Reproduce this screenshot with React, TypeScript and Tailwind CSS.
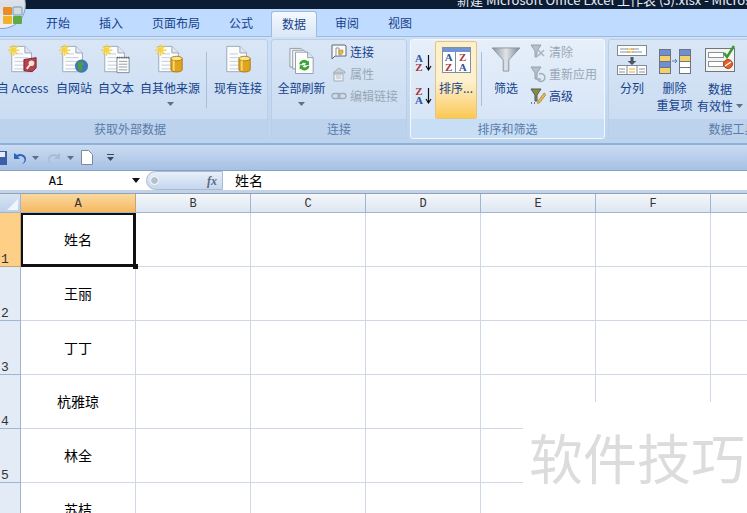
import React from "react";

const font = { fontFamily: '"Noto Sans CJK SC", "Liberation Sans", sans-serif' };

const columns = ["A", "B", "C", "D", "E", "F", "G"];
const rows = [
  { n: 1, name: "姓名" },
  { n: 2, name: "王丽" },
  { n: 3, name: "丁丁" },
  { n: 4, name: "杭雅琼" },
  { n: 5, name: "林全" },
  { n: 6, name: "苏桔" },
];

const DocIcon = ({ badge, star = true }: { badge: string; star?: boolean }) => (
  <svg width="30" height="31" viewBox="0 0 32 32">
    <path d="M4 2h14l7 7v20H4z" fill="#fbfcfe" stroke="#9aa6b4" />
    <path d="M18 2v7h7" fill="#dfe6ee" stroke="#9aa6b4" />
    <path d="M7 10h9M7 14h14M7 18h14M7 22h14M7 26h14" stroke="#c3ccd6" />
    {star && (
      <path
        d="M6 0v12M0 6h12M2 2l8 8M10 2l-8 8"
        stroke="#f6d43f"
        strokeWidth="1.6"
      />
    )}
    {badge === "access" && (
      <g>
        <path d="M17 16l13-2v11l-4 4-9-1z" fill="#b5434f" stroke="#7d2530" />
        <circle cx="25" cy="20" r="3" fill="#f6e2d8" />
        <path d="M24 21l-4 5" stroke="#f6e2d8" strokeWidth="2" />
      </g>
    )}
    {badge === "web" && (
      <g>
        <circle cx="24" cy="23" r="7" fill="#3f79b5" />
        <path d="M20 19l5-1 2 3-3 2 1 4-3 2-2-5z" fill="#4f9a45" />
      </g>
    )}
    {badge === "text" && (
      <g>
        <path d="M17 14h13v16H17z" fill="#fff" stroke="#7f8790" />
        <path d="M17 14h13" stroke="#555" strokeDasharray="1 1" strokeWidth="2" />
        <path d="M19 18h9M19 21h9M19 24h9M19 27h9" stroke="#8d96a1" />
      </g>
    )}
    {badge === "db" && (
      <g>
        <path d="M17 15v12c0 3 12 3 12 0V15z" fill="#e0a51f" stroke="#a87a12" />
        <ellipse cx="23" cy="15" rx="6" ry="2.4" fill="#fbe48c" stroke="#a87a12" />
        <path d="M20 17v11" stroke="#f7d76a" strokeWidth="2" />
      </g>
    )}
  </svg>
);

const RefreshIcon = () => (
  <svg width="26" height="29" viewBox="0 0 28 30">
    <path d="M1 2h12l5 5v15H1z" fill="#f2f4f7" stroke="#8f9aa6" />
    <path d="M4 4h12l5 5v15H4z" fill="#f6f8fa" stroke="#8f9aa6" />
    <path d="M7 6h13l6 6v17H7z" fill="#fff" stroke="#8f9aa6" />
    <path d="M20 6v6h6" fill="#dfe6ee" stroke="#8f9aa6" />
    <path d="M11 19a5.5 5.5 0 0 1 9.5-3l1-1v5h-5l1.800-1.800a3 3 0 0 0-4.800 1z" fill="#3aa535" />
    <path d="M22 21a5.500 5.500 0 0 1-9.500 3l-1 1v-5h5l-1.800 1.800a3 3 0 0 0 4.800-1z" fill="#3aa535" />
  </svg>
);

const ConnIcon = () => (
  <svg width="16" height="16" viewBox="0 0 16 16">
    <path d="M1 1h13l1 1v10H4l-3 3z" fill="#f7f8fa" stroke="#5e6875" />
    <path d="M5 4h3v8H5z" fill="#fff" stroke="#8a94a0" />
    <path d="M8 6h4v3l-2 2-2-1z" fill="#e8b93a" stroke="#a77f1b" strokeWidth="0.5" />
  </svg>
);

const PropsIcon = () => (
  <svg width="16" height="16" viewBox="0 0 16 16">
    <path d="M2 7l6-5 6 4v1H2z" fill="#c8ced6" stroke="#a5adb8" />
    <path d="M3 8h9v7H3z" fill="#eef1f4" stroke="#a5adb8" />
    <path d="M5 10h5M5 12h5" stroke="#b7bec8" />
  </svg>
);

const LinkIcon = () => (
  <svg width="16" height="16" viewBox="0 0 16 16">
    <rect x="1" y="5.500" width="8" height="5" rx="2.500" fill="none" stroke="#a2aab5" strokeWidth="1.300" />
    <rect x="7" y="5.500" width="8" height="5" rx="2.500" fill="none" stroke="#a2aab5" strokeWidth="1.300" />
  </svg>
);

const SortSmall = ({ top, bottom }: { top: string; bottom: string }) => (
  <div className="flex items-center h-[18px] w-[17px] gap-[1px]">
    <div className="flex flex-col items-center w-[9px] text-[11px] leading-[9px] font-bold" style={{ fontFamily: '"Liberation Serif", serif' }}>
      <span className={top === "A" ? "text-[#2f5597]" : "text-[#a03a3a]"}>{top}</span>
      <span className={bottom === "A" ? "text-[#2f5597]" : "text-[#a03a3a]"}>{bottom}</span>
    </div>
    <svg width="7" height="16" viewBox="0 0 7 16">
      <path d="M3.500 0v14M1 11l2.500 4L6 11" fill="none" stroke="#111" strokeWidth="1.200" />
    </svg>
  </div>
);

const SortBig = () => (
  <div className="w-[29px] h-[26px] border border-[#7f8ea3] bg-white flex flex-col">
    <div className="h-[4px] bg-[#6f95d6]" />
    <div
      className="flex-1 grid grid-cols-2 text-[11px] leading-[10px] font-bold text-center"
      style={{ fontFamily: '"Liberation Serif", serif' }}
    >
      <div className="border-r border-[#7f8ea3] text-[#2f5597]">A<br /><span className="text-[#a03a3a]">Z</span></div>
      <div className="text-[#a03a3a]">Z<br /><span className="text-[#2f5597]">A</span></div>
    </div>
  </div>
);

const Funnel = () => (
  <svg width="30" height="25" viewBox="0 0 32 27" className="mb-[3px]">
    <defs>
      <linearGradient id="fn" x1="0" x2="1">
        <stop offset="0" stopColor="#8a949e" />
        <stop offset="0.5" stopColor="#dfe4e8" />
        <stop offset="1" stopColor="#7d8790" />
      </linearGradient>
    </defs>
    <path d="M1 1h30L19 14v12h-6V14z" fill="url(#fn)" stroke="#8a949e" />
  </svg>
);

const SmallFunnel = ({ mode }: { mode: string }) => (
  <svg width="16" height="18" viewBox="0 0 16 18">
    <path
      d="M1 2h10L7 8v6H5V8z"
      fill={mode === "adv" ? "#8b8f3c" : "#b7c0ca"}
      stroke={mode === "adv" ? "#555" : "#98a2ae"}
    />
    {mode === "clear" && <path d="M8 7l6 6M14 7l-6 6" stroke="#aab3bd" strokeWidth="1.500" />}
    {mode === "reapply" && <path d="M9 9a4 4 0 1 1 0 7l-2-2h4" fill="none" stroke="#9fb0ba" strokeWidth="1.500" />}
    {mode === "adv" && (
      <g>
        <path d="M8 14l6-8 2 1.500-6 8-2.500 1z" fill="#eab84a" stroke="#7a5b16" strokeWidth="0.500" />
        <path d="M1 16h1M4 16h1" stroke="#111" />
      </g>
    )}
  </svg>
);

const TextToColumns = () => (
  <svg width="30" height="30" viewBox="0 0 30 30">
    <rect x="0.500" y="0.500" width="29" height="10" fill="#fff" stroke="#7f8a97" />
    <path d="M3 4h8M14 4h8M3 7h10M15 7h10" stroke="#8793a0" />
    <path d="M10 4h7M10 7h7" stroke="#eba92d" />
    <path d="M13.500 12h3v4h3l-4.500 4-4.500-4h3z" fill="#4c5560" />
    <rect x="0.500" y="20.500" width="29" height="9" fill="#fff" stroke="#7f8a97" />
    <path d="M10 20v10M20 20v10" stroke="#7f8a97" />
    <path d="M2 24h6M2 27h6M22 24h6M22 27h6" stroke="#8793a0" />
    <path d="M12 24h6M12 27h6" stroke="#eba92d" />
  </svg>
);

const Dedup = () => (
  <svg width="32" height="26" viewBox="0 0 32 26">
    {[0, 1, 2, 3].map((i) => (
      <rect key={i} x="0.500" y={0.5 + i * 6} width="11" height="6" fill={i % 2 ? "#f4cf6a" : "#6f8fd0"} stroke="#6a7584" />
    ))}
    <path d="M13 12h5M16 10l2 2-2 2" fill="none" stroke="#5b7fb0" />
    {[0, 1, 2, 3].map((i) => (
      <rect key={i} x="20.500" y={0.5 + i * 6} width="11" height="6" fill={i === 0 ? "#6f8fd0" : i === 1 ? "#f4cf6a" : "#fff"} stroke="#6a7584" />
    ))}
  </svg>
);

const Validation = () => (
  <svg width="31" height="28" viewBox="0 0 31 28" className="mb-[2px]">
    <rect x="0.500" y="3.500" width="29" height="23" fill="#f4f5f2" stroke="#6e7680" />
    <rect x="3.500" y="7.500" width="15" height="5" fill="#fff" stroke="#8a929c" />
    <rect x="3.500" y="16.500" width="15" height="5" fill="#fff" stroke="#8a929c" />
    <path d="M19 8l3 4 7-11" fill="none" stroke="#3b9a2f" strokeWidth="2.500" />
    <circle cx="23" cy="19" r="4.500" fill="#e2612a" stroke="#b03f15" />
    <path d="M20 21l6-4" stroke="#fff" strokeWidth="1.300" />
  </svg>
);

const Arrow = () => (
  <svg width="7" height="4" viewBox="0 0 7 4">
    <path d="M0 0h7L3.500 4z" fill="#5f6f85" />
  </svg>
);

const BigButton = ({
  width,
  icon,
  label,
  arrow,
}: {
  width: string;
  icon: React.ReactNode;
  label: string;
  arrow?: boolean;
}) => (
  <div className={`${width} shrink-0 flex flex-col items-center pt-[4px]`}>
    <div className="h-[31px] flex items-end justify-center">{icon}</div>
    <div className="mt-[4px] text-xs leading-[18px] whitespace-nowrap text-[#15428b]">{label}</div>
    {arrow && (
      <div className="mt-[5px]">
        <Arrow />
      </div>
    )}
  </div>
);

const SmallRow = ({
  icon,
  label,
  disabled,
}: {
  icon: React.ReactNode;
  label: string;
  disabled?: boolean;
}) => (
  <div className="h-[22px] flex items-center gap-[3px]">
    <div className="w-[16px] flex justify-center">{icon}</div>
    <span className={`text-xs whitespace-nowrap ${disabled ? "text-[#9aa7b6]" : "text-[#15428b]"}`}>{label}</span>
  </div>
);

const Group = ({
  width,
  label,
  active,
  children,
}: {
  width: string;
  label: string;
  active?: boolean;
  children: React.ReactNode;
}) => (
  <div
    className={`${width} shrink-0 h-[100px] flex flex-col rounded-[3px] border overflow-hidden ${
      active
        ? "border-[#f4f8fd] bg-gradient-to-b from-[#e6effa] to-[#d3e3f6]"
        : "border-[#b9cfe9] bg-gradient-to-b from-[#d9e6f6] to-[#c7daf1]"
    }`}
  >
    <div className="h-[80px] flex">{children}</div>
    <div
      className={`h-[19px] text-xs leading-[19px] text-center text-[#5a7ba8] ${
        active ? "bg-[#c8def5]" : "bg-[#bdd3ed]"
      }`}
    >
      {label}
    </div>
  </div>
);

export default function App() {
  return (
    <div className="relative w-[747px] h-[513px] overflow-hidden bg-white" style={font}>
      {/* title bar */}
      <div className="h-[9px] bg-[#0c1c33] overflow-hidden relative">
        <div className="absolute left-[457px] top-[-9px] text-[13px] leading-[17px] whitespace-nowrap text-[#e8edf3]">
          新建 Microsoft Office Excel 工作表 (3).xlsx - Microsoft Excel
        </div>
      </div>

      {/* tabs */}
      <div className="h-[28px] bg-[#bfdbff] flex items-end pl-[35px] text-xs text-[#15428b] border-b border-[#9ebbdf]">
        {["开始", "插入", "页面布局", "公式", "数据", "审阅", "视图"].map((t) => (
          <div
            key={t}
            className={`mr-[7px] leading-[24px] ${
              t === "数据"
                ? "h-[26px] px-[10px] bg-gradient-to-b from-[#f5f9fe] to-[#d9e7f7] border border-b-0 border-[#9ebbdf] rounded-t-[3px] -mb-[1px]"
                : "h-[25px] px-[11px]"
            }`}
          >
            {t}
          </div>
        ))}
      </div>

      {/* ribbon */}
      <div className="h-[108px] pt-[2px] bg-gradient-to-b from-[#cfe0f5] to-[#bcd3ee] border-b-2 border-[#8fb0d8]">
        <div className="flex gap-[3px] -ml-[8px]">
          <Group width="w-[276px]" label="获取外部数据">
            <BigButton width="w-[59px]" icon={<DocIcon badge="access" />} label="自 Access" />
            <BigButton width="w-[44px]" icon={<DocIcon badge="web" />} label="自网站" />
            <BigButton width="w-[40px]" icon={<DocIcon badge="text" />} label="自文本" />
            <BigButton width="w-[68px]" icon={<DocIcon badge="db" />} label="自其他来源" arrow />
            <div className="w-px h-[56px] mt-[12px] ml-[2px] mr-[4px] bg-[#a9bfd9]" />
            <BigButton width="w-[54px]" icon={<DocIcon badge="db" star={false} />} label="现有连接" />
          </Group>
          <Group width="w-[136px]" label="连接">
            <BigButton width="w-[59px]" icon={<RefreshIcon />} label="全部刷新" arrow />
            <div className="pt-[1px]">
              <SmallRow icon={<ConnIcon />} label="连接" />
              <SmallRow icon={<PropsIcon />} label="属性" disabled />
              <SmallRow icon={<LinkIcon />} label="编辑链接" disabled />
            </div>
          </Group>
          <Group width="w-[195px]" label="排序和筛选" active>
            <div className="w-[24px] shrink-0 flex flex-col items-center gap-[15px] pt-[14px]">
              <SortSmall top="A" bottom="Z" />
              <SortSmall top="Z" bottom="A" />
            </div>
            <div className="w-[42px] h-[78px] shrink-0 mt-px flex flex-col items-center pt-[5px] border border-[#e0c48a] rounded-[2px] bg-gradient-to-b from-[#fdf0c6] via-[#fdf1d0] to-[#fbc94f]">
              <SortBig />
              <div className="mt-[6px] text-xs leading-[18px] text-[#15428b]">排序...</div>
            </div>
            <div className="w-px h-[54px] mt-[12px] ml-[4px] bg-[#a9bfd9]" />
            <BigButton width="w-[48px]" icon={<Funnel />} label="筛选" />
            <div className="pt-[1px]">
              <SmallRow icon={<SmallFunnel mode="clear" />} label="清除" disabled />
              <SmallRow icon={<SmallFunnel mode="reapply" />} label="重新应用" disabled />
              <SmallRow icon={<SmallFunnel mode="adv" />} label="高级" />
            </div>
          </Group>
          <Group width="w-[249px]" label="数据工具">
            <BigButton width="w-[46px]" icon={<TextToColumns />} label="分列" />
            <div className="w-[39px] shrink-0 flex flex-col items-center pt-[4px]">
              <div className="h-[31px] flex items-end"><Dedup /></div>
              <div className="mt-[4px] text-xs leading-[18px] text-[#15428b] whitespace-nowrap">删除</div>
              <div className="text-xs leading-[16px] text-[#15428b] whitespace-nowrap">重复项</div>
            </div>
            <div className="w-[48px] shrink-0 flex flex-col items-center pt-[4px] ml-[2px]">
              <div className="h-[31px] flex items-end"><Validation /></div>
              <div className="mt-[5px] text-xs leading-[18px] text-[#15428b] whitespace-nowrap">数据</div>
              <div className="text-xs leading-[16px] text-[#15428b] whitespace-nowrap flex items-center gap-[3px]">
                有效性 <Arrow />
              </div>
            </div>
          </Group>
        </div>
      </div>

      {/* quick access toolbar */}
      <div className="h-[26px] bg-gradient-to-b from-[#cbdcf2] to-[#a6c0e4] border-b border-[#8aa3c4] flex items-center gap-[5px] -ml-[2px]">
        <svg width="9" height="14" viewBox="0 0 9 14">
          <path d="M0 0h9v14H0z" fill="#3b5fa8" />
          <path d="M2 1h5v5H2z" fill="#e8eef8" />
        </svg>
        <svg width="15" height="14" viewBox="0 0 15 14">
          <path d="M2 2v6h6L6 6a4 4 0 0 1 6 5l-2 2c4-1 5-5 3-8-2-2-6-3-8-1z" fill="#2e63b8" />
        </svg>
        <Arrow />
        <svg width="15" height="14" viewBox="0 0 15 14" className="ml-[3px]">
          <path d="M13 2v6H7l2-2a4 4 0 0 0-6 5l2 2c-4-1-5-5-3-8 2-2 6-3 8-1z" fill="#a9bcd3" />
        </svg>
        <Arrow />
        <svg width="12" height="15" viewBox="0 0 12 15" className="ml-[2px]">
          <path d="M0.500 0.500h7l4 4v10h-11z" fill="#fff" stroke="#7d8a99" />
        </svg>
        <svg width="7" height="7" viewBox="0 0 7 7" className="ml-[9px]">
          <path d="M0 0h7v1H0zM0 3h7L3.500 7z" fill="#3c4a5e" />
        </svg>
      </div>

      {/* formula bar */}
      <div className="h-[19px] flex items-center bg-white">
        <div className="w-[146px] shrink-0 flex items-center text-xs">
          <span className="w-[112px] text-center pt-[2px]" style={{ fontFamily: '"Liberation Mono", monospace' }}>A1</span>
          <svg width="8" height="5" viewBox="0 0 8 5" className="ml-[20px]">
            <path d="M0 0h8L4 5z" fill="#111" />
          </svg>
        </div>
        <div className="w-[77px] h-[19px] shrink-0 rounded-l-full border border-[#a9bbd2] bg-gradient-to-b from-[#e8f0fa] to-[#c4d6ee] flex items-center justify-between pl-[3px] pr-[5px]">
          <div className="w-[9px] h-[9px] rounded-full bg-[#b6c0cc] border border-white" />
          <span className="text-[12px] italic font-bold text-[#5a6a7d]" style={{ fontFamily: '"Liberation Serif", serif' }}>fx</span>
        </div>
        <div className="pl-[12px] pb-[2px] text-sm text-black">姓名</div>
      </div>

      <div className="h-[4px] bg-[#c3d2e5] border-b border-[#8fa2ba]" />

      {/* grid */}
      <div className="relative">
        <div className="flex h-[19px] border-b border-[#9eb6ce]">
          <div className="w-[21px] shrink-0 bg-gradient-to-b from-[#d7e4f4] to-[#bcd0ea] border-r border-[#9eb6ce] flex items-end justify-end p-[2px]">
            <div className="w-0 h-0 border-l-[11px] border-l-transparent border-b-[11px] border-b-[#f0f5fb]" />
          </div>
          {columns.map((c, i) => (
            <div
              key={c}
              className={`w-[115px] shrink-0 border-r text-center text-xs leading-[20px] text-[#333] ${
                i === 0
                  ? "bg-gradient-to-b from-[#f9d99f] to-[#f6b85f] border-[#c6a470]"
                  : "bg-gradient-to-b from-[#f4f7fb] to-[#dde6f2] border-[#9eb6ce]"
              }`}
              style={{ fontFamily: '"Liberation Mono", monospace' }}
            >
              {c}
            </div>
          ))}
        </div>
        {rows.map((r) => (
          <div key={r.n} className="flex h-[54px]">
            <div
              className={`w-[21px] shrink-0 border-r border-b flex items-end pl-[1px] text-[13px] leading-[12px] text-[#333] ${
                r.n === 1 ? "bg-[#fdcf87] border-[#c6a470]" : "bg-[#e3ebf6] border-[#9eb6ce]"
              }`}
              style={{ fontFamily: '"Liberation Mono", monospace' }}
            >
              {r.n}
            </div>
            {columns.map((c, i) => (
              <div
                key={c}
                className="w-[115px] shrink-0 border-r border-b border-[#d0d7e5] flex items-center justify-center pb-[2px] text-sm text-black"
              >
                {i === 0 ? r.name : ""}
              </div>
            ))}
          </div>
        ))}

        {/* selected cell */}
        <div className="absolute left-[21px] top-[19px] w-[115px] h-[54px] border-2 border-r-[3px] border-b-[3px] border-[#111] pointer-events-none" />
        <div className="absolute left-[133px] top-[70px] w-[5px] h-[5px] bg-[#111]" />
      </div>

      {/* watermark */}
      <div className="absolute left-[523px] top-[402px] right-0 bottom-0 bg-white flex items-start">
        <span className="mt-[25px] ml-[6px] text-[54px] leading-[60px] whitespace-nowrap text-[#dcdcdc]">软件技巧</span>
      </div>

      {/* office orb */}
      <div className="absolute -left-[22px] -top-[19px] w-[48px] h-[48px] rounded-full border border-[#8d9db3] bg-gradient-to-b from-[#f4f6f9] via-[#d9dfe7] to-[#eef1f5] flex items-center justify-center">
        <svg width="20" height="20" viewBox="0 0 20 20" className="ml-[22px] mt-[19px]">
          <rect x="0" y="2" width="9" height="8" rx="1" fill="#ee8a1f" />
          <rect x="0" y="11" width="9" height="8" rx="1" fill="#f3b22b" />
          <rect x="10" y="2" width="9" height="8" rx="1" fill="#d9d9d9" stroke="#5aa0c8" />
          <rect x="10" y="11" width="9" height="8" rx="1" fill="#5faa45" />
        </svg>
      </div>
    </div>
  );
}
